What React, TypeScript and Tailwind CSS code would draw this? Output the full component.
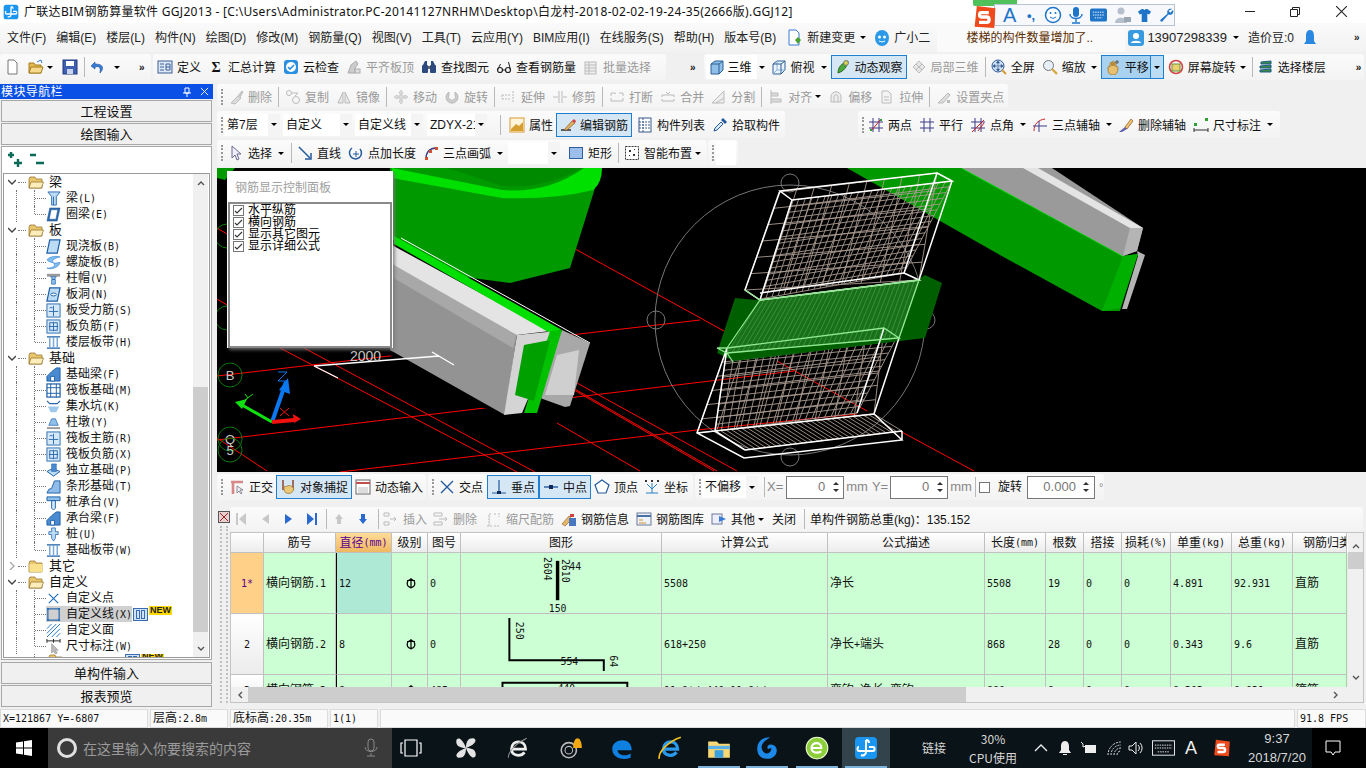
import type { ReactNode } from 'react';

const Ico = ({ children, className = 'w-4 h-4' }: { children: ReactNode; className?: string }) => (
  <svg viewBox="0 0 16 16" className={`${className} shrink-0`}>{children}</svg>
);

// toolbar icons
const icons: Record<string, ReactNode> = {
  doc: <path d="M4 1h6l3 3v11H4z" fill="#fff" stroke="#777" />,
  open: <><path d="M1 4h5l1 2h6v8H1z" fill="#e8b850" stroke="#a67c20" /><path d="M3 8h12l-2 6H1z" fill="#f6d98a" stroke="#a67c20" /><path d="M9 3l4-2 1 3" fill="none" stroke="#3a7bd5" /></>,
  save: <><rect x="1" y="1" width="14" height="14" fill="#3f5fb0" stroke="#223a80" /><rect x="4" y="2" width="8" height="5" fill="#fff" /><rect x="5" y="10" width="6" height="5" fill="#c9d3ec" /></>,
  undo: <path d="M5 3l-4 4 4 3V8c4-1 6 0 5 6 4-4 4-9-5-9z" fill="#3a7bd5" stroke="#1e4f9c" strokeWidth=".6" />,
  define: <><rect x="1" y="2" width="14" height="12" fill="#dce8f7" stroke="#3c5f94" /><path d="M3 5h4M3 8h4M3 11h4M9 5h4v6H9zM9 8h4" stroke="#3c5f94" fill="none" /></>,
  cloud: <><rect x="1" y="1" width="14" height="14" rx="3" fill="#2a8fe0" /><circle cx="8" cy="8" r="5" fill="#fff" /><path d="M5 8l2 2 4-4" stroke="#2a8fe0" strokeWidth="1.6" fill="none" /></>,
  align: <><path d="M2 14l3-8 5-4 2 3-3 4v5z" fill="#ccc" stroke="#aaa" /><rect x="9" y="10" width="5" height="4" fill="#ddd" stroke="#aaa" /></>,
  find: <><path d="M2 6l2-4h2v4zM10 6V2h2l2 4z" fill="#2c4a80" /><rect x="1" y="6" width="6" height="8" rx="1" fill="#2c4a80" /><rect x="9" y="6" width="6" height="8" rx="1" fill="#2c4a80" /><rect x="7" y="7" width="2" height="3" fill="#666" /></>,
  glasses: <><circle cx="4" cy="11" r="2.5" fill="none" stroke="#222" strokeWidth="1.2" /><circle cx="12" cy="11" r="2.5" fill="none" stroke="#222" strokeWidth="1.2" /><path d="M6.5 11h3M1.5 11l3-6M14.5 11l-2-8" stroke="#222" /></>,
  batch: <><rect x="2" y="3" width="11" height="12" fill="#eee" stroke="#bbb" /><path d="M2 6h11M2 9h11M2 12h11M6 3v12" stroke="#bbb" /></>,
  box3d: <><path d="M2 5l4-3h8v9l-4 4H2z" fill="#8fc0ea" stroke="#2c5f94" /><path d="M2 5h8v10M10 5l4-3" fill="none" stroke="#2c5f94" /></>,
  topview: <><path d="M2 5l4-3h8v9l-4 4H2z" fill="#eaf3fb" stroke="#2c5f94" /><path d="M6 2v9H14M6 11l-4 4" fill="none" stroke="#8fb4d8" /><path d="M2 5h8v10M10 5l4-3" fill="none" stroke="#2c5f94" /></>,
  orbit: <><path d="M3 14c0-6 4-10 10-12-1 6-4 10-10 12z" fill="#4ca83c" stroke="#2b6f20" /><circle cx="11" cy="4" r="2.4" fill="#d8d850" stroke="#777" /></>,
  local3d: <path d="M2 8l6-6 6 6-6 6z M5 5l6 6 M8 2v0 M11 5l-6 6" fill="#e6e6e6" stroke="#bbb" />,
  fit: <><circle cx="7" cy="7" r="6" fill="#cfe0f4" stroke="#2f5a96" /><path d="M7 2v10M2 7h10M7 2l-1.500 2h3zM7 12l-1.500-2h3zM2 7l2-1.500v3zM12 7l-2-1.500v3z" fill="#2f5a96" stroke="#2f5a96" strokeWidth=".6" /><path d="M11 11l4 4" stroke="#d69a30" strokeWidth="2" /></>,
  zoom: <><circle cx="6.500" cy="6.500" r="5" fill="#e6eef8" stroke="#777" /><path d="M10 10l5 5" stroke="#d6a840" strokeWidth="2.400" /></>,
  hand: <><path d="M3 9c0-2 1-2 2-1V4c1-1 2-1 2 0v3-4c1-1 2-1 2 0v4-3c1-1 2 0 2 1v3c1-1 2 0 2 1 0 3-1 7-5 7s-5-3-5-6z" fill="#e8c070" stroke="#9a7020" strokeWidth=".8" /><path d="M12 1v4M10 3h4" stroke="#555" /></>,
  rotate: <><circle cx="8" cy="8" r="6.500" fill="none" stroke="#d84040" strokeWidth="1.600" /><rect x="4" y="5" width="8" height="7" fill="#ecd070" stroke="#5a9a40" /></>,
  floors: <><path d="M3 3l10-1v3H3zM2 7l11-1v3H2zM2 11l11-1v3H2z" fill="#3a8a44" stroke="#1f5c8a" /></>,
  del: <><path d="M3 14l7-7 3 2-6 6z" fill="#ddd" stroke="#bbb" /><path d="M10 7l4-5 1 1-3 5" fill="#ccc" stroke="#bbb" /></>,
  copy: <><circle cx="4" cy="4" r="2.500" fill="none" stroke="#bbb" /><circle cx="11" cy="11" r="3.500" fill="none" stroke="#bbb" /><path d="M7 4h6l-3 3" fill="none" stroke="#bbb" /></>,
  mirror: <path d="M7 3L2 14h5zM9 3l5 11H9z" fill="#e8e8e8" stroke="#bbb" />,
  move: <path d="M8 1l2 3H9v3h3V6l3 2-3 2V9H9v3h1l-2 3-2-3h1V9H4v1L1 8l3-2v1h3V4H6z" fill="#ddd" stroke="#bbb" strokeWidth=".6" />,
  spin: <path d="M5 3a6 6 0 1 0 6 0v3a3.500 3.500 0 1 1-6 0z" fill="#ccc" stroke="#bbb" />,
  extend: <path d="M1 6h8M1 10h8M1 6v4M12 2v12" stroke="#bbb" fill="none" strokeDasharray="2 1" />,
  trim: <path d="M7 2v12M10 2v12M1 8h5M11 8h4" stroke="#bbb" fill="none" />,
  brk: <path d="M2 4h4l1 1M14 4h-4M2 12h12M2 4v3M14 4v3M2 9v3M14 9v3" stroke="#bbb" fill="none" />,
  merge: <path d="M2 6h12M2 12h12M2 6v2M14 6v2M2 10v2M14 10v2M6 3l2 2 2-2" stroke="#bbb" fill="none" />,
  split: <><path d="M1 14L13 2v12z" fill="#eee" stroke="#bbb" /><path d="M5 14l8-5" stroke="#bbb" /></>,
  alignL: <path d="M3 1v14M3 4h7v3H3M3 10h10v3H3" fill="#ddd" stroke="#bbb" />,
  offset: <path d="M3 13V8c0-7 10-7 10 0v5zM6 13V8c0-3 4-3 4 0v5" fill="#eee" stroke="#bbb" />,
  stretch: <path d="M3 2h6l3 3v9H3z M5 8h5M5 11h5" fill="#f4f4f4" stroke="#bbb" />,
  grip: <><path d="M2 14L12 4l2 2-7 8z" fill="#ddd" stroke="#bbb" /><rect x="11" y="11" width="3" height="3" fill="#bbb" /></>,
  attr: <><rect x="1" y="1" width="14" height="14" fill="#fff4dc" stroke="#d99a30" /><path d="M2 12l5-5 3 2 4-4v9H2z" fill="#d6a030" /></>,
  edit: <><path d="M1 13h10" stroke="#222" strokeWidth="1.400" /><path d="M4 13l8-9 3 2-8 7z" fill="#e0b060" stroke="#8a5a20" strokeWidth=".7" /><path d="M12 4l2-2 2 2-1 2" fill="#d84040" /></>,
  list: <><rect x="2" y="1" width="12" height="14" fill="#fff" stroke="#3a5a8a" /><path d="M2 5h12M2 8h12M2 11h12M6 1v14" stroke="#3a5a8a" strokeDasharray="2 1" /></>,
  dropper: <><path d="M2 14l1-3 6-6 2 2-6 6z" fill="#dceaf8" stroke="#245a9c" /><path d="M9 3l2-2 4 4-2 2z" fill="#245a9c" /></>,
  twoPt: <><path d="M1 5h14M1 11h14M5 1v14M11 1v14" stroke="#3a3a8a" /><path d="M3 14L13 2" stroke="#d02020" /><rect x="2" y="12" width="2" height="2" fill="#30a030" /><rect x="12" y="2" width="2" height="2" fill="#30a030" /></>,
  parallel: <path d="M1 5h14M1 11h14M5 1v14M11 1v14" stroke="#3a3a8a" />,
  angle: <><path d="M1 5h14M1 11h14M5 1v14M11 1v14" stroke="#3a3a8a" /><path d="M2 15L14 3M8 14L14 6" stroke="#d02020" /></>,
  arc3: <><path d="M2 14C2 7 6 3 13 2" fill="none" stroke="#d02020" /><path d="M1 9h14M7 4v11" stroke="#3a3a8a" /></>,
  delAxis: <><path d="M1 15l6-5 2 2-5 3z" fill="#6060b0" /><path d="M7 10l6-8 2 2-6 8z" fill="#f0c070" stroke="#8a5a20" strokeWidth=".7" /></>,
  dim: <><path d="M1 13h14M1 11v4M15 11v4" stroke="#333" /><rect x="1" y="6" width="3" height="3" fill="#30a030" /><rect x="12" y="1" width="3" height="3" fill="#30a030" /></>,
  cursor: <path d="M4 1v12l3-3 2 5 2-1-2-5h4z" fill="#eef" stroke="#6a6a8a" />,
  line: <><path d="M2 2l11 11" stroke="#245a9c" strokeWidth="1.500" /><path d="M14 8v6H8" fill="none" stroke="#245a9c" strokeWidth="1.500" /></>,
  ptLen: <><path d="M4 3a6 6 0 1 0 8 1" fill="none" stroke="#245a9c" strokeWidth="1.500" /><path d="M8 6v6M5 9h6" stroke="#245a9c" /></>,
  arc: <><path d="M3 14C3 7 7 3 13 3" fill="none" stroke="#3a3a8a" strokeWidth="1.500" /><rect x="2" y="12" width="3" height="3" fill="#d05030" /><rect x="6" y="5" width="3" height="3" fill="#d05030" /><rect x="12" y="2" width="3" height="3" fill="#d05030" /></>,
  rect: <><rect x="1.500" y="2.500" width="13" height="11" fill="#9dbdea" stroke="#2c5f9c" /></>,
  smart: <><rect x="1.500" y="1.500" width="13" height="13" fill="#fff" stroke="#333" strokeDasharray="2 1" /><path d="M5 5h2v2H5zM9 9h2v2H9zM10 4h1v1h-1zM5 10h1v1H5z" fill="#333" /></>,
  ortho: <><path d="M2 3h12M4 3v12" stroke="#d88888" strokeWidth="2.600" /><path d="M8 7v7l2-2 2 3 1-1-2-3h3z" fill="#eef" stroke="#555" strokeWidth=".6" /></>,
  snapHand: <><path d="M3 1v10M13 1v10" stroke="#8a3a20" strokeWidth="1.400" /><path d="M4 9c0-2 1-2 2-1 1-2 5-2 6 0 2 0 2 3 1 4-1 3-7 3-8 1-1-1-1-3-1-4z" fill="#ebc878" stroke="#9a7020" strokeWidth=".7" /></>,
  dynInput: <><rect x="1" y="1" width="14" height="14" fill="#fff" stroke="#666" /><path d="M1 4h14" stroke="#c05050" strokeWidth="2" /><rect x="3" y="8" width="10" height="6" fill="#ddd" /></>,
  cross: <path d="M2 2l12 12M14 2L2 14" stroke="#245a9c" strokeWidth="1.400" />,
  perp: <><path d="M8 1v14M1 14h14" stroke="#245a9c" strokeWidth="1.200" /><rect x="6" y="12" width="4" height="3" fill="#102a5c" /></>,
  mid: <><path d="M1 8h14" stroke="#245a9c" strokeWidth="1.400" /><rect x="6" y="6" width="4" height="4" fill="#102a5c" /></>,
  vertex: <path d="M8 1l7 5-3 8H4L1 6z" fill="#fff" stroke="#245a9c" strokeWidth="1.200" />,
  coord: <><path d="M8 4v10M2 14h12M3 5l5 5 5-5" fill="none" stroke="#2a80c0" /><path d="M1 1h2v2H1zM7 1h2v2H7zM13 1h2v2h-2z" fill="#333" /></>,
  insert: <path d="M1 2h5v3H1zM1 11h5v3H1zM7 8h6M13 8l-2-2M13 8l-2 2" fill="none" stroke="#bbb" />,
  remove: <path d="M1 2h8v3H1zM1 11h8v3H1zM6 8h8M14 8l-2-2M14 8l-2 2" fill="none" stroke="#bbb" />,
  scale: <path d="M3 15V3h3M13 2v4M1 15h5M3 12h1M3 9h1M3 6h1M8 3h3M8 15h5" fill="none" stroke="#bbb" strokeDasharray="2 1" />,
  info: <><path d="M1 13l7-8 3 3-7 7z" fill="#e4b868" stroke="#8a5a20" strokeWidth=".6" /><rect x="8" y="7" width="7" height="8" fill="#4a78c0" /><rect x="9" y="3" width="4" height="3" fill="#d04040" /></>,
  library: <><rect x="1" y="2" width="14" height="12" fill="#eef3fa" stroke="#6a7a9a" /><path d="M1 5h14" stroke="#4a70a8" strokeWidth="2" /><path d="M3 9h4M3 12h7" stroke="#d09030" /></>,
  other: <><rect x="1" y="3" width="10" height="10" fill="#eef" stroke="#6a7a9a" /><path d="M8 5l7 3-7 3z" fill="#3a7bd5" /></>,
};

const Icon = ({ name }: { name: string }) => <Ico>{icons[name]}</Ico>;

const Caret = ({ className = '' }: { className?: string }) => (
  <span className={`w-0 h-0 border-x-[3px] border-x-transparent border-t-[3px] border-t-black shrink-0 ${className}`} />
);

const Grip = () => (
  <span className="w-[2px] h-[16px] ml-[4px] shrink-0 border-l-2 border-dotted border-[#999]" />
);

const Sep = ({ className = '' }: { className?: string }) => <span className={`w-px h-[20px] bg-[#b8b8b8] shrink-0 ${className}`} />;

// one button of a toolbar: icon plus label
const Tool = ({ icon, label, off, active, className = '' }: { icon?: string; label?: string; off?: boolean; active?: boolean; className?: string }) => (
  <div className={`flex items-center gap-1 h-full shrink-0 ${off ? 'text-[#9a9a9a]' : 'text-[#111]'} ${active ? 'bg-[#d5e6f5] border border-[#1e7fd0] px-[3px]' : ''} ${className}`}>
    {icon && <Icon name={icon} />}
    {label && <span className="whitespace-nowrap relative top-px">{label}</span>}
  </div>
);

const Band = ({ className = '', children }: { className?: string; children: ReactNode }) => (
  <div className={`flex items-center shrink-0 rounded-[3px] bg-linear-to-b from-[#fbfbfb] to-[#f3f3f3] ${className}`}>{children}</div>
);

const Combo = ({ label, className = '' }: { label: string; className?: string }) => (
  <div className={`flex items-center justify-between h-[22px] bg-white shrink-0 overflow-hidden ${className}`}>
    <span className="pl-[3px] whitespace-nowrap overflow-hidden min-w-0">{label}</span>
    <span className="w-[12px] h-full bg-[#f4f4f4] flex items-center justify-center shrink-0"><Caret /></span>
  </div>
);

const Spin = ({ value, className = '' }: { value: string; className?: string }) => (
  <div className={`flex items-center justify-end h-[23px] bg-white border border-[#777] text-[#777] text-[13px] shrink-0 ${className}`}>
    <span>{value}</span>
    <span className="w-[15px] flex flex-col items-center gap-[4px] ml-[3px]">
      <span className="w-0 h-0 border-x-[3px] border-x-transparent border-b-[3px] border-b-[#333]" />
      <span className="w-0 h-0 border-x-[3px] border-x-transparent border-t-[3px] border-t-[#333]" />
    </span>
  </div>
);

// bitmap-looking text: latin at half the width of the han characters
const Sim = ({ text }: { text: string }) => (
  <>
    {text.split(/([\x20-\x7e]+)/).filter(Boolean).map((part, i) =>
      /^[\x20-\x7e]+$/.test(part)
        ? <span key={i} className="font-['DejaVu_Sans_Mono',monospace] text-[10px]">{part}</span>
        : <span key={i}>{part}</span>
    )}
  </>
);

// ---- tree ----
const treeIcons: Record<string, ReactNode> = {
  beam: <><path d="M2 1h13l-4 5v9H6V6z" fill="#bcdcf5" stroke="#2a6ab0" /><path d="M8 6v9" stroke="#2a6ab0" /></>,
  ring: <path d="M4 1h11l-3 14H1zM5.500 3l-2 10h7l2-10z" fill="#2a6ab0" stroke="#1c4f8c" strokeWidth=".5" />,
  slab: <path d="M4 1h11l-3 14H1z" fill="#bcdcf5" stroke="#1c5fa8" strokeWidth="1.300" />,
  spiral: <path d="M1 5c4-4 10-4 14-3-4 1-8 2-8 5s5 1 8 1c-1 5-9 8-14 6 4 0 8-1 8-4S4 9 1 5z" fill="#7dbef0" stroke="#2a7ad0" strokeWidth=".6" />,
  cap: <><path d="M1 3h14v3H1z" fill="#999" /><path d="M5 6h6l-2 3H7zM6 9h4v5H6z" fill="#8fc0ea" stroke="#1c5fa8" strokeWidth=".7" /></>,
  hole: <><path d="M4 1h11l-3 14H1z" fill="#bcdcf5" stroke="#1c5fa8" strokeWidth="1.300" /><ellipse cx="8" cy="8" rx="3" ry="1.500" fill="#fff" stroke="#1c5fa8" /></>,
  rebar: <><rect x="1" y="1" width="14" height="14" fill="#d5e8f8" stroke="#2a6ab0" /><path d="M8 3v11M3 9h10" stroke="#2a6ab0" /><path d="M4 5h3" stroke="#2a6ab0" /></>,
  neg: <><rect x="1" y="1" width="14" height="14" fill="#d5e8f8" stroke="#2a6ab0" /><rect x="4" y="4" width="8" height="8" fill="none" stroke="#2a6ab0" /><path d="M8 3v10M3 8h10" stroke="#2a6ab0" /></>,
  strip: <><path d="M1 2h14M1 14h14" stroke="#1c5fa8" strokeWidth="1.400" /><path d="M4 2v12M8 2v12M12 2v12" stroke="#7aa8d8" strokeWidth="1.600" /></>,
  fbeam: <><path d="M1 15V10l5-5 5-4h4v14z" fill="#4a8ad0" stroke="#1c5fa8" /><path d="M5 15v-5h4v5z" fill="#fff" stroke="#1c5fa8" /></>,
  raft: <><rect x="1" y="1" width="14" height="14" fill="#fff" stroke="#1c5fa8" strokeWidth="1.300" /><path d="M5 1v14M11 1v14M1 5h14M1 11h14" stroke="#1c5fa8" /></>,
  sump: <><path d="M1 2l3 3h8l3-3" fill="none" stroke="#2a6ab0" strokeWidth="1.300" /><path d="M2 8l3 6h6l3-6z" fill="#9fc8ea" /></>,
  pier: <><path d="M1 13h14v2H1z" fill="#999" /><path d="M6 4h4l3 7H3z" fill="#8fc0ea" stroke="#1c5fa8" strokeWidth=".7" /></>,
  foot: <><path d="M1 9l6-3 8 3-7 5z" fill="#bcdcf5" stroke="#1c5fa8" /><path d="M6 1h5v8H6z" fill="#4a8ad0" stroke="#1c5fa8" strokeWidth=".6" /></>,
  fstrip: <path d="M1 15l2-4 3-1 3-8h6v13z" fill="#8fbce8" stroke="#1c5fa8" />,
  pilecap: <><path d="M1 2h14v4H1z" fill="#8fc0ea" stroke="#1c5fa8" /><path d="M6 6h4v8l-2 2-2-2z" fill="#d5e8f8" stroke="#1c5fa8" /></>,
  pile: <path d="M6 1h4v4h3v3h-3v4l-2 3-2-3V8H3V5h3z" fill="#bcdcf5" stroke="#1c5fa8" strokeWidth=".8" />,
  point: <path d="M3 3l10 10M13 3L3 13" stroke="#1c6fc0" strokeWidth="1.200" />,
  cline: <><rect x="2" y="2" width="12" height="12" fill="none" stroke="#1c5fa8" strokeWidth="1.200" /><path d="M1 1h2v2H1zM13 1h2v2h-2zM1 13h2v2H1zM13 13h2v2h-2z" fill="#1c6fc0" /></>,
  face: <path d="M1 6l5-5M1 11l10-10M1 15L15 1M6 15l9-9M11 15l4-4" stroke="#1c6fc0" />,
  dim: <><path d="M1 2h14M1 0v4M8 0v4M15 0v4" stroke="#222" /><path d="M6 5v10l2-2 2 3 2-1-2-3h3z" fill="#bbb" stroke="#888" strokeWidth=".6" /></>,
};

type Row = { label: string; icon?: string; last?: boolean; badge?: boolean; selected?: boolean; closed?: boolean };
const tree: Row[] = [
  { label: '梁' },
  { label: '梁(L)', icon: 'beam' },
  { label: '圈梁(E)', icon: 'ring', last: true },
  { label: '板' },
  { label: '现浇板(B)', icon: 'slab' },
  { label: '螺旋板(B)', icon: 'spiral' },
  { label: '柱帽(V)', icon: 'cap' },
  { label: '板洞(N)', icon: 'hole' },
  { label: '板受力筋(S)', icon: 'rebar' },
  { label: '板负筋(F)', icon: 'neg' },
  { label: '楼层板带(H)', icon: 'strip', last: true },
  { label: '基础' },
  { label: '基础梁(F)', icon: 'fbeam' },
  { label: '筏板基础(M)', icon: 'raft' },
  { label: '集水坑(K)', icon: 'sump' },
  { label: '柱墩(Y)', icon: 'pier' },
  { label: '筏板主筋(R)', icon: 'rebar' },
  { label: '筏板负筋(X)', icon: 'neg' },
  { label: '独立基础(P)', icon: 'foot' },
  { label: '条形基础(T)', icon: 'fstrip' },
  { label: '桩承台(V)', icon: 'pilecap' },
  { label: '承台梁(F)', icon: 'fbeam' },
  { label: '桩(U)', icon: 'pile' },
  { label: '基础板带(W)', icon: 'strip', last: true },
  { label: '其它', closed: true },
  { label: '自定义' },
  { label: '自定义点', icon: 'point' },
  { label: '自定义线(X)', icon: 'cline', selected: true, badge: true },
  { label: '自定义面', icon: 'face' },
  { label: '尺寸标注(W)', icon: 'dim', last: true },
];

const Folder = ({ closed }: { closed?: boolean }) => (
  <svg viewBox="0 0 16 13" className="w-4 h-[13px] shrink-0">
    <path d="M1 3l1-2h5l1 2h6v9H1z" fill="#e9c56e" stroke="#9a7a30" strokeWidth=".8" />
    {closed
      ? <rect x="1.500" y="4" width="13" height="8" fill="#f8e08c" />
      : <path d="M3 6h12.500l-2 6H1z" fill="#fbeebc" stroke="#9a7a30" strokeWidth=".8" />}
  </svg>
);

const NewBadge = () => (
  <div className="flex items-start shrink-0 ml-px">
    <span className="w-[15px] h-[13px] border border-[#3a6ab0] bg-[#cfe3f8] flex justify-center gap-px pt-px">
      <span className="w-[4px] h-[9px] border border-[#3a6ab0]" />
      <span className="w-[4px] h-[9px] border border-[#3a6ab0]" />
    </span>
    <span className="ml-px -mt-[2px] px-px bg-[#ffd800] text-[#222] text-[9px] leading-[9px] font-bold font-['Liberation_Sans',sans-serif]">NEW</span>
  </div>
);

const TreeRow = ({ row }: { row: Row }) => {
  if (!row.icon) {
    return (
      <div className="h-4 flex items-center">
        <span className="w-[12px] flex justify-end shrink-0">
          <svg viewBox="0 0 8 8" className="w-2 h-2">
            <path d={row.closed ? 'M2 0l4 4-4 4' : 'M0 2l4 4 4-4'} fill="none" stroke={row.closed ? '#aaa' : '#444'} strokeWidth="1.400" />
          </svg>
        </span>
        <span className="w-[8px] ml-[2px] mr-[2px] border-t border-dotted border-[#777]" />
        <Folder closed={row.closed} />
        <span className="ml-[5px] whitespace-nowrap text-[13px]">{row.label}</span>
      </div>
    );
  }
  return (
    <div className="h-4 flex items-center">
      <span className="w-[13px] h-full border-r border-dotted border-[#777] shrink-0" />
      <span className={`w-[18px] border-r border-dotted border-[#777] shrink-0 ${row.last ? 'h-1/2 self-start' : 'h-full'}`} />
      <span className="w-[11px] border-t border-dotted border-[#777] shrink-0" />
      <div className={`flex items-center h-full ${row.selected ? 'bg-[#d0d0d0]' : ''}`}>
        <Ico className="w-[15px] h-[15px]">{treeIcons[row.icon]}</Ico>
        <span className="ml-[5px] whitespace-nowrap"><Sim text={row.label} /></span>
      </div>
      {row.badge && <NewBadge />}
    </div>
  );
};

const SideButton = ({ label }: { label: string }) => (
  <div className="h-[22px] mx-px mb-px pt-px flex items-center justify-center bg-[#f0f0f0] border border-[#a8a8a8] text-[13px] text-[#111]">{label}</div>
);

const Sidebar = () => (
  <aside className="w-[213px] shrink-0 flex flex-col">
    <div className="h-[15px] bg-[#0a50e6] text-white flex items-center pl-px text-[12px] tracking-[0.4px]">
      <span className="flex-1">模块导航栏</span>
      <svg viewBox="0 0 10 10" className="w-[10px] h-[10px] mr-[8px]"><path d="M3 1h4v5H3zM1 6h8M5 6v4" fill="none" stroke="#fff" /></svg>
      <svg viewBox="0 0 10 10" className="w-[9px] h-[9px] mr-[4px]"><path d="M1 1l8 8M9 1l-8 8" stroke="#fff" /></svg>
    </div>
    <div className="h-px" />
    <SideButton label="工程设置" />
    <SideButton label="绘图输入" />
    <div className="mx-[1px] flex-1 min-h-0 bg-white border border-[#a8a8a8] flex flex-col overflow-hidden">
      <div className="h-[26px] shrink-0 flex items-center pl-[5px] gap-[3px]">
        <svg viewBox="0 0 18 18" className="w-[18px] h-[18px]"><path d="M4 1v6M1 4h6M11 8v8M7 12h8" stroke="#0a6a5a" strokeWidth="2.400" /></svg>
        <svg viewBox="0 0 18 18" className="w-[18px] h-[18px]"><path d="M2 4h6M8 12h8" stroke="#0a6a5a" strokeWidth="2.400" /></svg>
      </div>
      <div className="flex-1 min-h-0 flex border border-[#9a9a9a] mx-px mb-px">
        <div className="flex-1 min-w-0 overflow-hidden">
          {tree.map((row) => <TreeRow key={row.label} row={row} />)}
          <div className="h-[9px] overflow-hidden flex items-start">
            <span className="w-[31px] h-full shrink-0 border-r border-dotted border-[#777]" />
            <span className="w-[13px]" />
            <Folder />
            <span className="w-[60px]" />
            <NewBadge />
          </div>
        </div>
        <div className="w-[15px] shrink-0 flex flex-col items-center bg-[#f0f0f0] mr-px">
          <svg viewBox="0 0 8 8" className="w-2 h-2 mt-[5px] mb-[200px]"><path d="M1 6l3-3 3 3" fill="none" stroke="#555" strokeWidth="1.400" /></svg>
          <div className="w-full h-[245px] bg-[#cdcdcd]" />
          <svg viewBox="0 0 8 8" className="w-2 h-2 mt-[13px]"><path d="M1 2l3 3 3-3" fill="none" stroke="#555" strokeWidth="1.400" /></svg>
        </div>
      </div>
    </div>
    <div className="h-[2px]" />
    <SideButton label="单构件输入" />
    <SideButton label="报表预览" />
  </aside>
);

// ---- 3D view ----
const lerp = (a: number[], b: number[], t: number) => [a[0] + (b[0] - a[0]) * t, a[1] + (b[1] - a[1]) * t];

// rebar mesh stretched over a four-cornered face
const Mesh = ({ q, nx, ny, color = '#a89a90', width = 0.9 }: { q: number[][]; nx: number; ny: number; color?: string; width?: number }) => {
  const lines: number[][][] = [];
  for (let i = 0; i <= nx; i++) lines.push([lerp(q[0], q[1], i / nx), lerp(q[3], q[2], i / nx)]);
  for (let j = 0; j <= ny; j++) lines.push([lerp(q[0], q[3], j / ny), lerp(q[1], q[2], j / ny)]);
  return (
    <g stroke={color} strokeWidth={width}>
      {lines.map((l, i) => <line key={i} x1={l[0][0]} y1={l[0][1]} x2={l[1][0]} y2={l[1][1]} />)}
    </g>
  );
};

const redLines = [
  [0, 272, 577, 203], [123, 304, 480, 262], [0, 208, 483, 152], [360, 82, 507, 163], [63, 180, 300, 304],
  [87, 180, 318, 304], [200, 127, 520, 303], [205, 133, 500, 303], [210, 137, 497, 303], [340, 255, 423, 303],
  [683, 263, 757, 303], [560, 193, 650, 243], [213, 0, 233, 8], [0, 270, 50, 303], [0, 131, 10, 137], [0, 60, 10, 66],
  [480, 262, 640, 246], [360, 82, 300, 48], [853, 60, 900, 86],
];

const bubbles = [
  { x: 236, y: 10, t: '8' }, { x: 10, y: 68, t: '' }, { x: 10, y: 150, t: '' }, { x: 13, y: 207, t: 'B' },
  { x: 13, y: 271, t: 'Q' }, { x: 13, y: 282, t: '5' },
];

const View3D = () => (
  <div className="relative h-[304px] bg-black overflow-hidden shrink-0">
    <svg viewBox="0 0 1149 304" className="w-[1149px] h-[304px] block">
      {redLines.map((l, i) => <line key={i} x1={l[0]} y1={l[1]} x2={l[2]} y2={l[3]} stroke="#ff0000" />)}
      {bubbles.map((b) => (
        <g key={b.y}>
          <circle cx={b.x} cy={b.y} r="12" fill="none" stroke="#0a7a0a" />
          <text x={b.x} y={b.y + 5} textAnchor="middle" fontSize="13" fill="#c8c8c8" fontFamily="Liberation Sans">{b.t}</text>
        </g>
      ))}

      {/* U shaped band */}
      <path d="M0 0h18L8 12 0 10zM173 0h210l-5 20-25 80-60 15-60-8-60-37z" fill="#009a00" />
      <path d="M230 0l55 18q40 4 80-18z" fill="#008a00" />
      <path d="M175 0l110 22q45 4 82-22h18q0 15-9 22-40 10-91 8L175 10z" fill="#00e000" />

      {/* grey beam */}
      <path d="M173 76l172 88 28 11-20 63-5 1-41 8-57-10-77-50z" fill="#000" />
      <path d="M173 95l127 71-12 81-115-65z" fill="#939393" />
      <path d="M173 95l127 71-4 14-123-72z" fill="#a8a8a8" />
      <path d="M173 76l160 87-33 4-127-72z" fill="#e4e4e4" />
      <path d="M177 68l168 94-12 3-156-89z" fill="#00e000" />
      <path d="M184 70l189 105" stroke="#fff" fill="none" />
      <path d="M345 162l28 13-20 63-5 1-25-9 14-50z" fill="#a8a8a8" />
      <path d="M340 187l22-5-5 45-29 0z" fill="#cfcfcf" />
      <path d="M300 167l40-4-35 82-18 2z" fill="#d4d4d4" />
      <path d="M345 162l-25 83-13 0 26-82z" fill="#00c000" />
      <path d="M307 177l26-5-16 61-19-6z" fill="#00a000" />

      {/* dimension */}
      <path d="M97 198l125-10M97 198l24 12M215 184l22 13" stroke="#fff" strokeWidth="1.300" fill="none" />
      <text x="133" y="193" fontSize="14" fill="#c8c8c8" fontFamily="Liberation Sans">2000</text>

      {/* axes */}
      <path d="M55 254l14-40" stroke="#0a78f0" strokeWidth="4" />
      <path d="M71 210l-9 12 11 4z" fill="#0a78f0" />
      <path d="M55 254l-30-17" stroke="#10e010" strokeWidth="3" />
      <path d="M18 234l12-3-5 10z" fill="#10e010" />
      <path d="M55 254l22-2" stroke="#f01010" strokeWidth="4" />
      <path d="M84 251l-8-5 1 9z" fill="#f01010" />
      <path d="M61 204h9l-9 9h9" fill="none" stroke="#0a78f0" />
      <path d="M28 232l8 -6M28 226l3 4" stroke="#10e010" fill="none" />
      <path d="M63 240l9 8M72 240l-9 8" stroke="#f01010" />

      {/* long green beam, right */}
      <path d="M630 0h115l161 88 15-2-18 57h-18L783 87z" fill="#009900" />
      <path d="M906 88l15-2-18 54-18 3z" fill="#00b000" />
      <path d="M745 0l161 88" stroke="#00e000" strokeWidth="1.500" />
      <path d="M745 0h90l91 60-6 23-14 5z" fill="#9a9a9a" />
      <path d="M806 0h15l105 60h-13z" fill="#e4e4e4" />
      <path d="M913 60h13l-6 23-14 5z" fill="#b4b4b4" />
      <path d="M920 83l8 4-18 54h-5l16-53z" fill="#b4b4b4" />

      {/* guide circles */}
      <g fill="none" stroke="#777">
        <circle cx="573" cy="152" r="135" />
        <circle cx="573" cy="15" r="9" />
        <circle cx="439" cy="152" r="9" />
        <circle cx="709" cy="152" r="9" />
        <circle cx="573" cy="289" r="9" />
      </g>

      {/* rebar cage */}
      <Mesh q={[[575, 32], [735, 13], [687, 105], [543, 131]]} nx={24} ny={16} />
      <Mesh q={[[562, 24], [720, 5], [702, 112], [528, 122]]} nx={9} ny={6} />
      <Mesh q={[[510, 182], [682, 165], [640, 245], [498, 263]]} nx={22} ny={12} />
      <Mesh q={[[510, 180], [667, 160], [657, 246], [480, 265]]} nx={9} ny={6} />
      <Mesh q={[[498, 263], [657, 246], [685, 263], [528, 282]]} nx={30} ny={1} />

      <path d="M518 130l22 2 160-20 8-5 17 8-17 55-191 23-17-8z" fill="#005f00" />
      <path d="M543 132l159-20-20 58-172 15z" fill="#1a701a" />
      <Mesh q={[[543, 132], [702, 112], [682, 170], [510, 185]]} nx={34} ny={1} color="#3f9a3f" width={0.8} />
      <g fill="none" stroke="#fff" strokeWidth="1.500">
        <path d="M563 23L720 5l15 8-160 19zM563 23l12 9M720 5l15 8M563 23l-35 99 15 10 32-100M735 13l-33 99-15-7 33-100M528 122l15 10 159-20-15-7-144 20" />
        <path d="M510 180l-30 85 47 25 158-18 -28-26M498 263l-18 2M657 246l-159 17 12-83M682 170l-25 76M667 160l-27 85M528 282l157-19M498 263l30 19M685 263v9" />
      </g>
      <g fill="none" stroke="#90e890" strokeWidth="1.300">
        <path d="M528 122l15 10 159-20M543 132l-33 48M702 112l-20 58" />
        <path d="M510 180l157-20 15 10-172 15-10-5zM510 185l6 9" />
      </g>
    </svg>

    {/* control panel floating on the view */}
    <div className="absolute left-[10px] top-[3px] w-[166px] h-[177px] bg-white shadow-[2px_2px_3px_rgba(120,120,120,0.8)] flex flex-col">
      <div className="h-[31px] shrink-0 flex items-center pl-[8px] text-[12px] text-[#a0a0a0] font-['Noto_Sans_CJK_SC',sans-serif]">钢筋显示控制面板</div>
      <div className="flex-1 mx-px border-2 border-[#8a8a8a] pl-[3px]">
        {['水平纵筋', '横向钢筋', '显示其它图元', '显示详细公式'].map((t) => (
          <div key={t} className="h-[12px] flex items-center text-[12px] leading-[12px] text-black">
            <span className="w-[11px] h-[11px] border border-[#777] flex items-center justify-center shrink-0">
              <svg viewBox="0 0 9 9" className="w-[9px] h-[9px]"><path d="M1 5l2 2 5-5" fill="none" stroke="#333" strokeWidth="1.100" /></svg>
            </span>
            <span className="ml-[4px]">{t}</span>
          </div>
        ))}
      </div>
    </div>
  </div>
);

// ---- rebar table ----
const headers = ['', '筋号', '直径(mm)', '级别', '图号', '图形', '计算公式', '公式描述', '长度(mm)', '根数', '搭接', '损耗(%)', '单重(kg)', '总重(kg)', '钢筋归类'];
const GRID = 'grid grid-cols-[33px_72px_56px_36px_33px_201px_166px_157px_61px_38px_38px_49px_61px_61px_54px]';

const GradeMark = () => (
  <svg viewBox="0 0 12 12" className="w-3 h-3">
    <circle cx="6" cy="6.500" r="3.800" fill="none" stroke="#000" strokeWidth="1.300" />
    <path d="M6 1v10.500M2 3.500h8" stroke="#000" strokeWidth="1.200" />
  </svg>
);

const Shape1 = () => (
  <svg viewBox="0 0 201 61" className="w-[201px] h-[60px]">
    <path d="M96 8v40" stroke="#000" strokeWidth="3.500" />
    <g fontSize="10" fill="#111" fontFamily="DejaVu Sans Mono">
      <text x="82" y="4" transform="rotate(90 82 4)">2604</text>
      <text x="101" y="6" transform="rotate(90 101 6)">2610</text>
      <text x="108" y="17">44</text>
      <text x="87" y="60">150</text>
    </g>
  </svg>
);

const Shape2 = () => (
  <svg viewBox="0 0 201 61" className="w-[201px] h-[60px]">
    <path d="M47 4v43h96v11" fill="none" stroke="#000" strokeWidth="2" />
    <g fontSize="10" fill="#111" fontFamily="DejaVu Sans Mono">
      <text x="54" y="8" transform="rotate(90 54 8)">250</text>
      <text x="99" y="52">554</text>
      <text x="149" y="42" transform="rotate(90 149 42)">64</text>
    </g>
  </svg>
);

const Shape3 = () => (
  <svg viewBox="0 0 201 31" className="w-[201px] h-[30px]">
    <path d="M39 14V8h129v6" fill="none" stroke="#000" strokeWidth="2" />
    <text x="96" y="18" fontSize="10" fill="#111" fontFamily="DejaVu Sans Mono">440</text>
  </svg>
);

const rows = [
  { n: '1*', cells: ['横向钢筋.1', '12', '', '0', '', '5508', '净长', '5508', '19', '0', '0', '4.891', '92.931', '直筋'], shape: <Shape1 />, h: 'h-[61px]' },
  { n: '2', cells: ['横向钢筋.2', '8', '', '0', '', '618+250', '净长+端头', '868', '28', '0', '0', '0.343', '9.6', '直筋'], shape: <Shape2 />, h: 'h-[61px]' },
  { n: '3', cells: ['横向钢筋.3', '8', '', '485', '', '11.9*d+440+11.9*d', '弯钩+净长+弯钩', '880', '9', '0', '0', '0.303', '0.031', '箍筋'], shape: <Shape3 />, h: 'h-[31px]' },
];

const RebarTable = () => (
  <div className="flex-1 min-h-0 mt-px mb-[5px] mr-[2px] border border-[#c4c4c4] bg-white flex flex-col overflow-hidden">
    <div className="flex flex-1 min-h-0">
      <div className="flex-1 min-w-0 overflow-hidden">
        <div className={`${GRID} h-[20px] text-[12px] text-[#111]`}>
          {headers.map((h, i) => (
            <div key={i} className={`flex items-center whitespace-nowrap overflow-hidden border-r border-b border-[#c0c0c0] ${i === 14 ? 'pl-[10px]' : 'justify-center'} ${i === 2 ? 'bg-linear-to-b from-[#ffdc98] to-[#efb860] text-[#5c0090]' : 'bg-linear-to-b from-white to-[#ececec]'}`}>
              <Sim text={h} />
            </div>
          ))}
        </div>
        {rows.map((row, r) => (
          <div key={row.n} className={`${GRID} ${row.h} text-[12px] text-[#111] bg-[#ccffd4]`}>
            <div className={`flex items-center justify-center border-r border-b border-[#c0c0c0] ${r === 0 ? 'bg-[#ffd088] text-[#5c0090]' : 'bg-linear-to-b from-white to-[#ececec]'}`}><Sim text={row.n} /></div>
            {row.cells.map((c, i) => (
              <div key={i} className={`flex items-center whitespace-nowrap overflow-hidden border-r border-b border-[#c0c0c0] pl-[2px] ${i === 1 ? 'border-l border-l-black' : ''} ${i === 1 && r === 0 ? 'bg-[#aee9d5]' : ''} ${i === 2 ? 'justify-center' : ''} ${i === 4 ? 'pl-0' : ''}`}>
                {i === 2 ? <GradeMark /> : i === 4 ? row.shape : <Sim text={c} />}
              </div>
            ))}
          </div>
        ))}
      </div>
      <div className="w-[15px] shrink-0 bg-[#f0f0f0] flex flex-col items-center">
        <svg viewBox="0 0 8 8" className="w-2 h-2 mt-[9px]"><path d="M1 6l3-3 3 3" fill="none" stroke="#555" strokeWidth="1.400" /></svg>
        <div className="w-full h-[17px] mt-[2px] bg-[#cdcdcd]" />
        <svg viewBox="0 0 8 8" className="w-2 h-2 mt-[105px]"><path d="M1 2l3 3 3-3" fill="none" stroke="#555" strokeWidth="1.400" /></svg>
      </div>
    </div>
    <div className="h-[15px] shrink-0 bg-[#f0f0f0] flex items-center">
      <svg viewBox="0 0 8 8" className="w-2 h-2 ml-[5px]"><path d="M6 1L3 4l3 3" fill="none" stroke="#555" strokeWidth="1.400" /></svg>
      <div className="w-[718px] h-full ml-[4px] bg-[#cdcdcd]" />
      <span className="flex-1" />
      <svg viewBox="0 0 8 8" className="w-2 h-2 mr-[23px]"><path d="M2 1l3 3-3 3" fill="none" stroke="#555" strokeWidth="1.400" /></svg>
    </div>
  </div>
);

const Arrow = ({ d, c }: { d: string; c: string }) => (
  <svg viewBox="0 0 12 14" className="w-3 h-[14px] shrink-0"><path d={d} fill={c} /></svg>
);

const StatusCell = ({ text, className = '' }: { text: string; className?: string }) => (
  <div className={`h-[19px] flex items-center pl-[2px] border border-[#dcdcdc] bg-[#fafafa] whitespace-nowrap shrink-0 ${className}`}><Sim text={text} /></div>
);

// ---- task bar ----
const TaskIcon = ({ children, active, bar, className = 'w-[48px]' }: { children: ReactNode; active?: boolean; bar?: boolean; className?: string }) => (
  <div className={`relative h-full flex items-center justify-center shrink-0 ${active ? 'bg-[#33434c]' : ''} ${className}`}>
    {children}
    {bar && <span className="absolute bottom-0 left-[3px] right-[3px] h-[2px] bg-[#7cb3dd]" />}
  </div>
);

const Tb = ({ children, className = 'w-[26px] h-[26px]' }: { children: ReactNode; className?: string }) => (
  <svg viewBox="0 0 24 24" className={className}>{children}</svg>
);

const AppLogo = ({ className }: { className: string }) => (
  <svg viewBox="0 0 24 24" className={className}>
    <rect x="1" y="1" width="22" height="22" rx="4" fill="#1a96f0" />
    <path d="M12 4v12c0 3-3 4-5 3M5 11c-2 0-2 4 0 4h14c2 0 2-4 0-4h-4M12 4c2 0 3 1 3 3" fill="none" stroke="#fff" strokeWidth="2" />
  </svg>
);

const SogouS = ({ className }: { className: string }) => (
  <svg viewBox="2 1 21 22" className={className}>
    <path d="M5 2l17 2-1 18-18-1z" fill="#ef4a1c" />
    <path d="M16 8H9c-2 0-2 4 0 4h5c3 0 3 5 0 5H7" fill="none" stroke="#fff" strokeWidth="3" />
  </svg>
);

const TaskBar = () => (
  <footer className="h-[40px] shrink-0 bg-[#0a1317] flex items-center text-[#d8d8d8] font-['Noto_Sans_CJK_SC',sans-serif]">
    <div className="w-[48px] h-full bg-black flex items-center justify-center shrink-0">
      <svg viewBox="0 0 16 16" className="w-4 h-4"><path d="M0 2.500l7-1v6H0zM8 1.300l8-1.300v7.500H8zM0 8.500h7v6l-7-1zM8 8.500h8V16l-8-1.200z" fill="#fff" /></svg>
    </div>
    <div className="w-[344px] h-full bg-[#3a3a3a] flex items-center pl-[9px] shrink-0">
      <span className="w-[20px] h-[20px] rounded-full border-[3px] border-[#e0e0e0] shrink-0" />
      <span className="ml-[6px] text-[14px] text-[#9a9a9a] flex-1">在这里输入你要搜索的内容</span>
      <svg viewBox="0 0 14 20" className="w-[14px] h-[20px] mr-[14px]"><rect x="4" y="1" width="6" height="12" rx="3" fill="none" stroke="#888" /><path d="M1 9c0 6 12 6 12 0M7 15v3M3 18h8" fill="none" stroke="#888" /></svg>
    </div>
    <TaskIcon className="w-[38px]">
      <svg viewBox="0 0 22 20" className="w-[22px] h-[20px]"><path d="M5 2h12v16H5zM3 5H1v10h2M19 5h2v10h-2" fill="none" stroke="#fff" strokeWidth="1.200" /></svg>
    </TaskIcon>
    <TaskIcon className="w-[48px] ml-[12px]">
      <Tb><path d="M12 12C6 12 3 10 3 6s5-5 9 6zM12 12c0-6 2-9 6-9s5 5-6 9zM12 12c6 0 9 2 9 6s-5 5-9-6zM12 12c0 6-2 9-6 9s-5-5 6-9z" fill="#e4e4e4" /></Tb>
    </TaskIcon>
    <TaskIcon className="w-[48px] ml-[4px]">
      <Tb><path d="M6 13h13c0-9-13-9-13 0 0 7 9 7 12 3" fill="none" stroke="#eee" strokeWidth="2.500" /><path d="M3 21c0-6 8-14 17-18" fill="none" stroke="#999" /></Tb>
    </TaskIcon>
    <TaskIcon className="w-[48px] ml-[5px]">
      <Tb><circle cx="10" cy="14" r="7" fill="none" stroke="#bbb" strokeWidth="1.500" /><circle cx="10" cy="14" r="3.500" fill="none" stroke="#bbb" /><path d="M14 12c0-6 2-9 4-9s4 3 4 9z" fill="#f2a810" /></Tb>
    </TaskIcon>
    <TaskIcon className="w-[48px] ml-[3px]">
      <Tb><path d="M3 13C3 3 21 1 21 14H8c0 5 8 6 12 3v4c-8 3-17 0-17-8z" fill="#0f7fe0" /></Tb>
    </TaskIcon>
    <TaskIcon>
      <Tb><path d="M6 13h13c0-9-13-9-13 0 0 7 9 7 12 3" fill="none" stroke="#2a9aee" strokeWidth="3" /><path d="M2 22c-1-6 8-16 20-20" fill="none" stroke="#f2c020" strokeWidth="1.500" /></Tb>
    </TaskIcon>
    <TaskIcon bar className="w-[48px] ml-px">
      <Tb><path d="M2 6h8l2 2h10v13H2z" fill="#f8d775" /><rect x="8" y="14" width="8" height="7" fill="#3ba0e0" /><rect x="2" y="10" width="20" height="3" fill="#5ab2e6" /></Tb>
    </TaskIcon>
    <TaskIcon bar>
      <Tb><path d="M15 2c-8 0-12 5-12 11 0 6 4 9 9 9 6 0 9-4 9-8 0-3-3-6-7-5-2 1-2 3-1 4l3-1c0 3-2 5-4 5-3 0-5-3-5-6 0-3 3-6 8-9z" fill="#1c88e8" /></Tb>
    </TaskIcon>
    <TaskIcon bar className="w-[48px] ml-[2px]">
      <Tb><circle cx="12" cy="12" r="10" fill="#8ccf3a" stroke="#e8f8d0" /><path d="M7 12h9c0-6-9-6-9 0 0 5 6 5 9 3" fill="none" stroke="#fff" strokeWidth="2" /></Tb>
    </TaskIcon>
    <TaskIcon active bar className="w-[48px] ml-px">
      <AppLogo className="w-[24px] h-[24px]" />
    </TaskIcon>
    <span className="ml-[32px] text-[12px] w-[26px] shrink-0">链接</span>
    <div className="ml-[21px] w-[48px] text-center text-[12px] leading-[19px] shrink-0">
      <div>30%</div>
      <div className="whitespace-nowrap">CPU使用</div>
    </div>
    <div className="ml-[17px] flex items-center shrink-0">
      <svg viewBox="0 0 14 8" className="w-[14px] h-[8px]"><path d="M1 7l6-6 6 6" fill="none" stroke="#eee" strokeWidth="1.300" /></svg>
      <svg viewBox="0 0 14 16" className="w-[14px] h-[16px] ml-[10px]"><path d="M7 1c-3 0-4 3-4 5v4l-2 3h12l-2-3V6c0-2-1-5-4-5zM5 14h4v1H5z" fill="#eee" /></svg>
      <svg viewBox="0 0 18 14" className="w-[18px] h-[14px] ml-[8px]"><rect x="5" y="4" width="11" height="8" fill="#eee" /><path d="M1 1l2 2v3l3-1" fill="none" stroke="#eee" /></svg>
      <svg viewBox="0 0 16 16" className="w-4 h-4 ml-[8px]"><path d="M2 15a13 13 0 0 1 13-13M5 15a10 10 0 0 1 10-10M8 15a7 7 0 0 1 7-7M11 15a4 4 0 0 1 4-4" fill="none" stroke="#ddd" strokeDasharray="2 1" /></svg>
      <svg viewBox="0 0 16 16" className="w-4 h-4 ml-[6px]"><path d="M1 6h3l4-4v12l-4-4H1z" fill="none" stroke="#eee" /><path d="M10 5a4 4 0 0 1 0 6M12 3a7 7 0 0 1 0 10" fill="none" stroke="#eee" /></svg>
      <svg viewBox="0 0 24 16" className="w-[23px] h-4 ml-[8px]"><rect x=".5" y=".5" width="23" height="15" fill="none" stroke="#eee" /><path d="M3 5h18M3 8h18M6 12h12" stroke="#eee" strokeDasharray="1.500 1" /></svg>
      <span className="ml-[10px] text-[18px] font-['Liberation_Sans',sans-serif] text-[#eee]">A</span>
      <SogouS className="w-[18px] h-[18px] ml-[16px]" />
    </div>
    <span className="flex-1" />
    <div className="w-[70px] text-center leading-[19px] shrink-0 font-['Liberation_Sans',sans-serif] text-[13px]">
      <div>9:37</div>
      <div>2018/7/20</div>
    </div>
    <div className="w-[54px] h-full bg-black flex items-center justify-center pr-[12px] shrink-0">
      <svg viewBox="0 0 16 16" className="w-4 h-4"><path d="M1 1h14v11H10l-2 3-2-3H1z" fill="none" stroke="#fff" /></svg>
    </div>
  </footer>
);

// input method bar that floats over the window's top edge
const Sogou = () => (
  <div className="absolute left-[970px] top-0 w-[206px] h-[30px]">
    <div className="absolute left-[3px] top-0 w-[44px] h-[6px] bg-[#4fc05a] rounded-b-[2px]" />
    <div className="absolute left-[24px] top-[4px] w-[181px] h-[22px] bg-[#f6f8fb] border border-[#b8c4d4] flex items-center pl-[8px] gap-[5px]">
      <span className="w-[16px] text-[20px] leading-none text-[#1e74c8] font-['Liberation_Sans',sans-serif]">A</span>
      <span className="w-[14px] text-[13px] leading-none text-[#1e74c8] font-bold text-center">•,</span>
      <svg viewBox="0 0 18 18" className="w-[18px] h-[18px] ml-px"><circle cx="9" cy="9" r="7.500" fill="#fff" stroke="#1e74c8" strokeWidth="1.500" /><circle cx="6.500" cy="7" r="1" fill="#1e74c8" /><circle cx="11.500" cy="7" r="1" fill="#1e74c8" /><path d="M6 11q3 3 6 0" fill="none" stroke="#1e74c8" /></svg>
      <svg viewBox="0 0 14 18" className="w-[14px] h-[18px] ml-[2px]"><rect x="4" y="1" width="6" height="10" rx="3" fill="#1e74c8" /><path d="M1 8c0 6 12 6 12 0M7 13v3M3 17h8" fill="none" stroke="#1e74c8" strokeWidth="1.400" /></svg>
      <svg viewBox="0 0 18 14" className="w-[17px] h-[14px] ml-[2px]"><rect width="18" height="14" rx="2" fill="#1e74c8" /><path d="M3 4h12M3 7h12M5 10h8" stroke="#fff" strokeDasharray="1.500 1" /></svg>
      <svg viewBox="0 0 18 18" className="w-[18px] h-[18px] ml-[2px]"><circle cx="7" cy="5" r="3.500" fill="#b6c0cc" /><path d="M1 17c0-7 12-7 12 0z" fill="#b6c0cc" /><rect x="10" y="11" width="7" height="5" fill="#9aa6b2" /></svg>
      <svg viewBox="0 0 16 16" className="w-[15px] h-[15px]"><path d="M5 1L1 4l2 3 2-1v9h6V6l2 1 2-3-4-3H9a1 1 0 0 1-2 0z" fill="#1e74c8" /></svg>
      <svg viewBox="0 0 16 16" className="w-[15px] h-[15px] ml-[2px]"><path d="M14 1c-3-1-6 1-5 5L1 13l2 2 7-8c4 1 6-2 5-5l-3 3-2-2z" fill="#1e74c8" /></svg>
    </div>
    <SogouS className="absolute left-0 top-[5px] w-[30px] h-[24px]" />
  </div>
);

export default function App() {
  return (
    <div className="w-[1366px] h-[768px] overflow-hidden relative flex flex-col bg-[#f0f0f0] text-[12px] text-[#111] font-['Liberation_Sans','Noto_Sans_CJK_SC',sans-serif]">
      {/* title bar */}
      <header className="h-[23px] shrink-0 bg-white flex items-center">
        <AppLogo className="w-[16px] h-[16px] ml-[3px]" />
        <span className="ml-[5px] text-[12px] tracking-[0.3px] whitespace-nowrap font-['Noto_Sans','Noto_Sans_CJK_SC',sans-serif]">广联达BIM钢筋算量软件 GGJ2013 - [C:\Users\Administrator.PC-20141127NRHM\Desktop\白龙村-2018-02-02-19-24-35(2666版).GGJ12]</span>
        <span className="flex-1" />
        <span className="w-[10px] h-px bg-[#222] mr-[35px]" />
        <svg viewBox="0 0 10 10" className="w-[10px] h-[10px] mr-[36px]"><path d="M.5 2.500h7v7h-7zM2.500 2.500v-2h7v7h-2" fill="none" stroke="#222" /></svg>
        <svg viewBox="0 0 10 10" className="w-[11px] h-[11px] mr-[19px]"><path d="M0 0l10 10M10 0L0 10" stroke="#222" /></svg>
      </header>
      <Sogou />

      {/* menu */}
      <nav className="h-[29px] shrink-0 flex items-center pl-[7px] bg-linear-to-b from-[#fafafa] to-[#f2f2f2] text-[#222]">
        <div className="flex items-center gap-[10px]">
          {['文件(F)', '编辑(E)', '楼层(L)', '构件(N)', '绘图(D)', '修改(M)', '钢筋量(Q)', '视图(V)', '工具(T)', '云应用(Y)', 'BIM应用(I)', '在线服务(S)', '帮助(H)', '版本号(B)'].map((m) => (
            <span key={m} className="whitespace-nowrap">{m}</span>
          ))}
        </div>
        <svg viewBox="0 0 16 18" className="w-4 h-[18px] ml-[10px]"><path d="M3 1h7l3 3v12H3z" fill="#fff" stroke="#3a7bd5" /><path d="M9 11l3-3 3 3-3 4z" fill="#4aa030" /></svg>
        <span className="ml-[5px] whitespace-nowrap">新建变更</span>
        <Caret className="ml-[5px]" />
        <svg viewBox="0 0 18 18" className="w-[18px] h-[18px] ml-[7px]"><ellipse cx="9" cy="9" rx="7" ry="8" fill="#2a9ae8" /><circle cx="6.500" cy="8" r="1.500" fill="#fff" /><circle cx="11.500" cy="8" r="1.500" fill="#fff" /><path d="M6 12q3 2 6 0" stroke="#fff" fill="none" /></svg>
        <span className="ml-[3px] whitespace-nowrap">广小二</span>
        <div className="ml-[7px] w-[188px] h-[28px] bg-[#fafafa] flex items-center pl-[29px] text-[#5a2c00] whitespace-nowrap shrink-0">楼梯的构件数量增加了..</div>
        <svg viewBox="0 0 16 16" className="w-4 h-4 ml-[3px]"><rect width="16" height="16" rx="3" fill="#3a9ae0" /><circle cx="8" cy="6" r="3" fill="#fff" /><path d="M3 13c0-3 10-3 10 0z" fill="#fff" /></svg>
        <span className="ml-[3px] text-[13px] text-[#222]">13907298339</span>
        <Caret className="ml-[6px]" />
        <span className="ml-[9px] whitespace-nowrap">造价豆:0</span>
        <svg viewBox="0 0 14 18" className="w-[14px] h-[18px] ml-[9px]"><path d="M7 1C4 1 3 4 3 7v5l-2 3h12l-2-3V7c0-3-1-6-4-6z" fill="#2a88e0" /></svg>
        <span className="ml-[37px] text-[10px] font-bold">»</span>
      </nav>

      {/* main tool bar */}
      <div className="h-[26px] mt-[2px] shrink-0 flex items-center">
        <Band className="h-full w-[151px] pl-[4px]">
          <Tool icon="doc" />
          <Tool icon="open" className="ml-[8px]" />
          <Caret className="ml-[3px]" />
          <Tool icon="save" className="ml-[9px]" />
          <Sep className="ml-[6px]" />
          <Tool icon="undo" className="ml-[5px]" />
          <Caret className="ml-[8px]" />
          <span className="ml-[19px] text-[10px] font-bold">»</span>
        </Band>
        <Band className="h-full w-[513px] ml-[2px] pl-[4px] gap-[7px]">
          <Tool icon="define" label="定义" />
          <div className="flex items-center gap-1"><span className="w-4 text-center text-[14px] font-bold font-['Liberation_Serif',serif]">Σ</span><span className="relative top-px">汇总计算</span></div>
          <Tool icon="cloud" label="云检查" />
          <Tool icon="align" label="平齐板顶" off />
          <Tool icon="find" label="查找图元" />
          <Tool icon="glasses" label="查看钢筋量" />
          <Tool icon="batch" label="批量选择" off />
        </Band>
        <span className="ml-[24px] text-[10px] font-bold">»</span>
        <Band className="h-full w-[660px] ml-[8px] pl-[2px]">
          <div className="h-[24px] bg-white flex items-center pl-[3px] pr-[5px] gap-[2px]"><Icon name="box3d" /><span className="ml-[1px] relative top-px">三维</span></div>
          <span className="w-[10px] flex justify-center"><Caret /></span>
          <Tool icon="topview" label="俯视" className="ml-[4px]" />
          <Caret className="ml-[6px]" />
          <Tool icon="orbit" label="动态观察" active className="ml-[4px] !h-[24px]" />
          <Tool icon="local3d" label="局部三维" off className="ml-[4px]" />
          <Sep className="ml-[6px]" />
          <Tool icon="fit" label="全屏" className="ml-[5px]" />
          <Tool icon="zoom" label="缩放" className="ml-[7px]" />
          <Caret className="ml-[5px]" />
          <Tool icon="hand" label="平移" active className="ml-[4px] !h-[24px] !bg-[#a9d2f0] w-[50px]" />
          <div className="w-[13px] h-[24px] bg-[#bcdcf4] border-y border-r border-[#1e7fd0] flex items-center justify-center"><Caret /></div>
          <Tool icon="rotate" label="屏幕旋转" className="ml-[4px]" />
          <Caret className="ml-[4px]" />
          <Sep className="ml-[6px]" />
          <Tool icon="floors" label="选择楼层" className="ml-[5px]" />
          <span className="ml-[30px] text-[10px] font-bold">»</span>
        </Band>
      </div>

      <main className="flex h-[624px] mt-[4px] shrink-0">
        <Sidebar />
        <div className="flex-1 min-w-0 ml-[4px] flex flex-col">
          <Band className="h-[24px] w-[791px] gap-[7px] pt-px">
            <Grip />
            <Tool icon="del" label="删除" off className="-ml-[2px]" />
            <Sep className="-mx-px" />
            <Tool icon="copy" label="复制" off />
            <Tool icon="mirror" label="镜像" off />
            <Sep className="-mx-px" />
            <Tool icon="move" label="移动" off />
            <Tool icon="spin" label="旋转" off />
            <Sep className="-mx-px" />
            <Tool icon="extend" label="延伸" off />
            <Tool icon="trim" label="修剪" off />
            <Sep className="-mx-px" />
            <Tool icon="brk" label="打断" off />
            <Tool icon="merge" label="合并" off />
            <Tool icon="split" label="分割" off />
            <Sep className="-mx-px" />
            <div className="flex items-center gap-[3px]"><Tool icon="alignL" label="对齐" off /><Caret /></div>
            <Tool icon="offset" label="偏移" off />
            <Tool icon="stretch" label="拉伸" off />
            <Sep className="-mx-px" />
            <Tool icon="grip" label="设置夹点" off />
          </Band>

          <div className="h-[27px] mt-[3px] flex shrink-0">
            <Band className="h-full w-[568px]">
              <Grip />
              <Combo label="第7层" className="w-[56px] ml-[1px]" />
              <Combo label="自定义" className="w-[69px] ml-[3px]" />
              <Combo label="自定义线" className="w-[68px] ml-[3px]" />
              <Combo label="ZDYX-21" className="w-[60px] ml-[4px]" />
              <Sep className="ml-[13px]" />
              <Tool icon="attr" label="属性" className="ml-[8px]" />
              <Tool icon="edit" label="编辑钢筋" active className="ml-[3px] !h-[24px]" />
              <Tool icon="list" label="构件列表" className="ml-[5px]" />
              <Tool icon="dropper" label="拾取构件" className="ml-[7px]" />
            </Band>
            <Band className="h-full w-[422px] ml-[73px]">
              <Grip />
              <Tool icon="twoPt" label="两点" className="ml-[4px]" />
              <Tool icon="parallel" label="平行" className="ml-[7px]" />
              <Tool icon="angle" label="点角" className="ml-[7px]" />
              <Caret className="ml-[6px]" />
              <Tool icon="arc3" label="三点辅轴" className="ml-[6px]" />
              <Caret className="ml-[6px]" />
              <Tool icon="delAxis" label="删除辅轴" className="ml-[6px]" />
              <Tool icon="dim" label="尺寸标注" className="ml-[7px]" />
              <Caret className="ml-[6px]" />
            </Band>
          </div>

          <div className="h-[26px] mt-[2px] flex shrink-0">
            <Band className="h-full w-[490px]">
              <Grip />
              <Tool icon="cursor" label="选择" className="ml-[5px]" />
              <Caret className="ml-[6px]" />
              <Sep className="ml-[7px]" />
              <Tool icon="line" label="直线" className="ml-[5px]" />
              <Tool icon="ptLen" label="点加长度" className="ml-[7px]" />
              <Tool icon="arc" label="三点画弧" className="ml-[7px]" />
              <Caret className="ml-[6px]" />
              <Combo label="" className="w-[52px] ml-[5px]" />
              <Tool icon="rect" label="矩形" className="ml-[8px]" />
              <Sep className="ml-[6px]" />
              <Tool icon="smart" label="智能布置" className="ml-[5px]" />
              <Caret className="ml-[3px]" />
            </Band>
            <Band className="h-full w-[30px] ml-px"><Grip /><span className="ml-[2px] w-[20px] h-[24px] bg-white" /></Band>
          </div>

          <div className="mt-[2px]"><View3D /></div>

          <div className="h-[26px] mt-[2px] flex shrink-0">
            <Band className="h-full w-[209px]">
              <Grip />
              <Tool icon="ortho" label="正交" className="ml-[6px]" />
              <Tool icon="snapHand" label="对象捕捉" active className="ml-[3px] !h-[24px]" />
              <Tool icon="dynInput" label="动态输入" className="ml-[3px]" />
            </Band>
            <Band className="h-full w-[265px] ml-[2px]">
              <Grip />
              <Tool icon="cross" label="交点" className="ml-[5px]" />
              <Tool icon="perp" label="垂点" active className="ml-[4px] !h-[24px]" />
              <Tool icon="mid" label="中点" active className="!h-[24px] ml-0" />
              <Tool icon="vertex" label="顶点" className="ml-[3px]" />
              <Tool icon="coord" label="坐标" className="ml-[6px]" />
            </Band>
            <Band className="h-full w-[409px] ml-[2px] text-[#888] text-[13px] whitespace-nowrap">
              <Grip />
              <Combo label="不偏移" className="w-[56px] ml-[1px] text-[12px] text-[#111]" />
              <Sep className="ml-[6px]" />
              <span className="ml-[2px] shrink-0">X=</span>
              <Spin value="0" className="w-[58px] ml-[3px]" />
              <span className="ml-[2px] shrink-0">mm</span>
              <span className="ml-[4px] shrink-0">Y=</span>
              <Spin value="0" className="w-[58px] ml-[2px]" />
              <span className="ml-[2px] shrink-0">mm</span>
              <Sep className="ml-[3px]" />
              <span className="w-[11px] h-[11px] ml-[3px] border border-[#777] bg-white shrink-0" />
              <span className="ml-[8px] text-[12px] text-[#111] shrink-0">旋转</span>
              <Spin value="0.000" className="w-[68px] ml-[5px]" />
              <span className="ml-[4px] text-[11px] shrink-0">°</span>
            </Band>
          </div>

          <div className="flex flex-1 min-h-0 mt-[7px]">
            <div className="w-[13px] shrink-0 flex flex-col items-center">
              <span className="w-[12px] h-[12px] mt-[4px] border border-[#555] bg-[#e8d0d0] flex items-center justify-center">
                <svg viewBox="0 0 10 10" className="w-[10px] h-[10px]"><path d="M1 1l8 8M9 1l-8 8" stroke="#a02020" /></svg>
              </span>
              <span className="mt-[3px] mb-[5px] w-[8px] flex-1 border-x-2 border-dotted border-[#c0c0c0]" />
            </div>
            <div className="flex-1 min-w-0 flex flex-col">
              <Band className="h-[24px] mr-[3px] pl-[5px]">
                <Arrow d="M1 1h2v12H1zM11 1v12L4 7z" c="#c8c8c8" />
                <span className="w-[12px]" />
                <Arrow d="M10 2v10L3 7z" c="#c8c8c8" />
                <span className="w-[11px]" />
                <Arrow d="M3 2v10l7-5z" c="#2a6ad0" />
                <span className="w-[12px]" />
                <Arrow d="M11 1h-2v12h2zM1 1v12l7-6z" c="#2a6ad0" />
                <Sep className="ml-[8px]" />
                <span className="w-[6px]" />
                <Arrow d="M6 2l4 5H8v5H4V7H2z" c="#c8c8c8" />
                <span className="w-[12px]" />
                <Arrow d="M4 2h4v5h2l-4 5-4-5h2z" c="#2a6ad0" />
                <Sep className="ml-[9px]" />
                <Tool icon="insert" label="插入" off className="ml-[4px]" />
                <Tool icon="remove" label="删除" off className="ml-[6px]" />
                <Tool icon="scale" label="缩尺配筋" off className="ml-[9px]" />
                <Tool icon="info" label="钢筋信息" className="ml-[7px]" />
                <Tool icon="library" label="钢筋图库" className="ml-[7px]" />
                <Tool icon="other" label="其他" className="ml-[7px]" />
                <Caret className="ml-[3px]" />
                <span className="ml-[8px] relative top-px">关闭</span>
                <Sep className="ml-[8px]" />
                <span className="ml-[5px] whitespace-nowrap relative top-px">单构件钢筋总重(kg)：135.152</span>
              </Band>
              <RebarTable />
            </div>
          </div>
        </div>
      </main>

      <div className="h-[20px] shrink-0 flex items-center gap-[2px] bg-[#f0f0f0]">
        <StatusCell text="X=121867 Y=-6807" className="w-[148px]" />
        <StatusCell text="层高:2.8m" className="w-[78px]" />
        <StatusCell text="底标高:20.35m" className="w-[98px]" />
        <StatusCell text="1(1)" className="w-[48px]" />
        <div className="flex-1 h-[19px] border border-[#dcdcdc] bg-[#fafafa]" />
        <StatusCell text="91.8 FPS" className="w-[69px]" />
      </div>
      <TaskBar />
    </div>
  );
}
